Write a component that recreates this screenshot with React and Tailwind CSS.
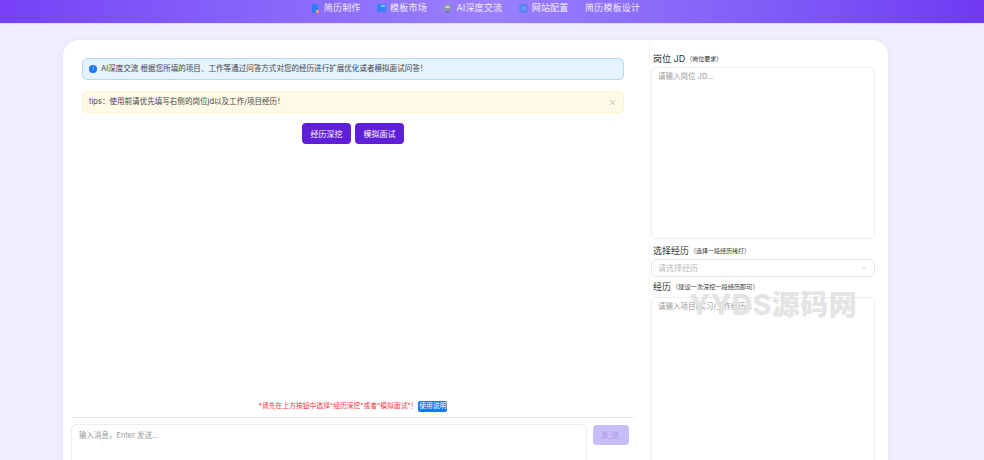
import React from "react";
import { ChevronDown, X } from "lucide-react";

function NavItem({ icon, label }) {
  return (
    <div className="flex items-center gap-[4px]">
      {icon}
      <span>{label}</span>
    </div>
  );
}

export default function App() {
  return (
    <div className="relative h-[460px] w-[984px] overflow-hidden bg-[#f0eefc] font-['Inter','Noto_Sans_CJK_SC',sans-serif] text-[#333]">
      <header className="flex h-[24px] items-start justify-center border-b border-[#e4d6fa] bg-gradient-to-r from-[#7640f6] via-[#9980fd] to-[#6f38f2] pt-[1px] text-[9px] leading-[14px] tracking-[0.2px] text-[#f1edff]">
        <nav className="flex gap-[16.5px] pr-[32px]">
          <NavItem
            label="简历制作"
            icon={
              <svg width="8" height="9" viewBox="0 0 8 9">
                <rect width="6" height="9" x="0" fill="#2f7cf6" rx="1" />
                <rect width="3" height="3" x="4" y="6" fill="#f59a6b" />
              </svg>
            }
          />
          <NavItem
            label="模板市场"
            icon={
              <svg width="9" height="8" viewBox="0 0 9 8">
                <rect width="9" height="8" fill="#2f86f6" rx="1" />
                <rect width="4" height="2" x="4" y="1" fill="#7cc0fb" />
              </svg>
            }
          />
          <NavItem
            label="AI深度交流"
            icon={
              <svg width="9" height="9" viewBox="0 0 9 9">
                <rect width="8" height="6" x="0.5" y="0.5" fill="#8f96a6" rx="1.5" />
                <rect width="4" height="2" x="2.5" y="2" fill="#c9ced8" />
                <rect width="3" height="2" x="3" y="7" fill="#6f7788" />
              </svg>
            }
          />
          <NavItem
            label="网站配置"
            icon={
              <svg width="9" height="9" viewBox="0 0 9 9">
                <rect width="9" height="9" fill="#5f83f5" rx="2" />
                <rect width="3" height="3" x="3" y="3" fill="#7d9cf8" />
              </svg>
            }
          />
          <span>简历模板设计</span>
        </nav>
      </header>

      <main className="ml-[63px] mt-[16px] flex h-[460px] w-[825px] rounded-[16px] bg-white pl-[9px] pr-[13px] shadow-[0_0_8px_rgba(120,100,220,0.06)]">
        <section className="flex h-[444px] w-[578px] flex-col border-r border-[#f5f5f8] pr-[15px]">
          <div className="flex-1 px-[10px] pt-[18px]">
            <div className="flex h-[22px] items-center gap-[4px] rounded-[5px] border border-[#b5d9f7] bg-[#e4f3fe] pl-[6px] text-[7.55px] text-[#444]">
              <span className="flex h-[8px] w-[8px] items-center justify-center rounded-full bg-[#1677ff] text-[5px] text-white">i</span>
              <span>AI深度交流 根据您所填的项目、工作等通过问答方式对您的经历进行扩展优化或者模拟面试问答！</span>
            </div>
            <div className="mt-[11px] flex h-[22px] items-center justify-between rounded-[5px] border border-[#fdf3c9] bg-[#fff9e6] pl-[6px] pr-[6px] text-[7.55px] text-[#444]">
              <span>tips：使用前请优先填写右侧的岗位jd以及工作/项目经历！</span>
              <X size={9} strokeWidth={1.25} className="text-[#888]" />
            </div>
            <div className="mt-[10px] flex justify-center gap-[4px]">
              <button className="h-[21px] w-[49px] rounded-[4px] bg-[#5f1fd8] text-[8px] text-white">经历深挖</button>
              <button className="h-[21px] w-[49px] rounded-[4px] bg-[#5f1fd8] text-[8px] text-white">模拟面试</button>
            </div>
          </div>
          <div className="flex h-[16px] items-center justify-center gap-[1px] text-[6.8px]">
            <span className="text-[#f5333f]">*请先在上方按钮中选择"经历深挖"或者"模拟面试"！</span>
            <span className="flex h-[11px] w-[29px] items-center justify-center rounded-[2px] bg-[#1677ff] text-[6.8px] text-white">使用说明</span>
          </div>
          <div className="mt-[3px] flex gap-[6px] border-t border-[#e9e9ec] pt-[6px]">
            <div className="-ml-[1px] h-[60px] w-[516px] rounded-[5px] border border-[#ececf0] px-[7px] py-[5px] text-[7.5px] text-[#999]">
              输入消息，Enter 发送...
            </div>
            <button className="mr-[5px] mt-[1px] h-[20px] w-[36px] rounded-[4px] bg-[#c8bcfb] text-[8px] tracking-[2px] text-[#a99ae0]">发送</button>
          </div>
        </section>

        <aside className="ml-[1px] w-[224px] pt-[12px] text-[#333]">
          <label className="ml-[2px] flex h-[13px] items-center gap-[1px] text-[9px]">
            岗位 JD<span className="text-[6px]">（岗位要求）</span>
          </label>
          <div className="mt-[2px] h-[172px] rounded-[5px] border border-[#ececf0] px-[6px] py-[3px] text-[7.5px] text-[#999]">
            请输入岗位 JD...
          </div>
          <label className="ml-[2px] mt-[5px] flex h-[13px] items-center gap-[1px] text-[9px]">
            选择经历<span className="text-[6px]">（选择一段经历拷打）</span>
          </label>
          <div className="mt-[2px] flex h-[18px] items-center justify-between rounded-[5px] border border-[#e6e6ea] px-[6px] text-[8px] text-[#bbb]">
            <span>请选择经历</span>
            <ChevronDown size={8} className="text-[#bbb]" />
          </div>
          <label className="ml-[2px] mt-[3px] flex h-[13px] items-center gap-[1px] text-[9px]">
            经历<span className="text-[6.2px]">（建议一次深挖一段经历即可）</span>
          </label>
          <div className="mt-[4px] h-[170px] rounded-[5px] border border-[#ececf0] px-[6px] py-[3px] text-[7.5px] text-[#999]">
            请输入项目/实习/工作经历...
          </div>
        </aside>
      </main>

      <div className="pointer-events-none absolute left-[689px] top-[288px] text-[28px] font-extrabold leading-[34px] tracking-[0.5px] text-[#e2e2e2] opacity-90">
        YYDS源码网
      </div>
    </div>
  );
}
